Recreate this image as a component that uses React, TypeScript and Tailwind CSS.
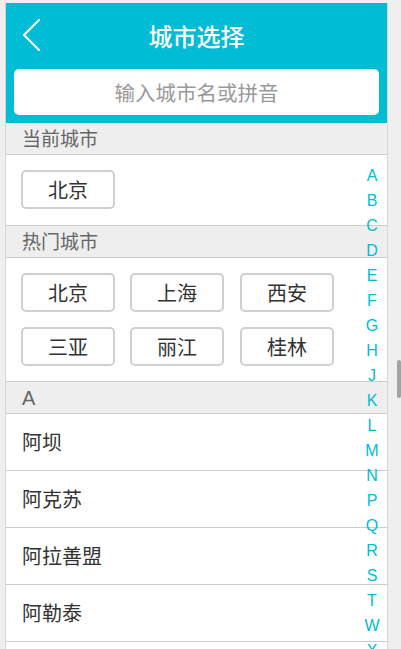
import React from "react";

const cjk = { fontFamily: '"Noto Sans CJK SC", "Liberation Sans", sans-serif' };
const latin = { fontFamily: '"Liberation Sans", Arial, sans-serif' };

const hot = ["北京", "上海", "西安", "三亚", "丽江", "桂林"];
const aList = ["阿坝", "阿克苏", "阿拉善盟", "阿勒泰", "阿里"];
const letters = ["A", "B", "C", "D", "E", "F", "G", "H", "J", "K", "L", "M", "N", "P", "Q", "R", "S", "T", "W", "X", "Y", "Z"];

function CityBtn({ name }: { name: string }) {
  return (
    <div className="h-[39px] w-[94px] rounded-[5px] border-2 border-[#cfcfcf] bg-white flex items-center justify-center text-[20px] text-[#333]">
      {name}
    </div>
  );
}

function SectionHead({ title }: { title: string }) {
  return (
    <div className="h-[32px] bg-[#eeeeee] border-b border-[#cccccc] pl-[16px] flex items-center text-[19px] text-[#666]">
      {title}
    </div>
  );
}

export default function App() {
  return (
    <div className="relative h-[649px] w-[401px] overflow-hidden bg-[#efefef]" style={cjk}>
      <div className="relative ml-[5px] mt-[3px] w-[383px] border-x border-[#d6d6d6] bg-white">
        {/* header */}
        <div className="bg-[#00bcd4] px-[8px] pb-[8px]">
          <div className="relative h-[66px] flex items-center justify-center">
            <svg className="absolute left-[8px] top-[16px]" width="20" height="32" viewBox="0 0 20 32" fill="none">
              <path d="M17 1 L2 16 L17 31" stroke="white" strokeWidth="2" strokeLinecap="round" strokeLinejoin="round" />
            </svg>
            <span className="text-white text-[24px] font-medium">城市选择</span>
          </div>
          <div className="h-[46px] rounded-[5px] bg-white flex items-center justify-center text-[20.5px] text-[#999]">
            输入城市名或拼音
          </div>
        </div>

        <SectionHead title="当前城市" />
        <div className="px-[15px] pt-[15px] pb-[16px] border-b border-[#cccccc]">
          <CityBtn name="北京" />
        </div>

        <SectionHead title="热门城市" />
        <div className="px-[15px] py-[15px] border-b border-[#cccccc] grid grid-cols-[94px_95px_94px] gap-x-[15px] gap-y-[15px]">
          {hot.map((c) => (
            <CityBtn key={c} name={c} />
          ))}
        </div>

        <div className="h-[32px] bg-[#eeeeee] border-b border-[#cccccc] pl-[16px] flex items-center text-[20px] text-[#666]" style={latin}>
          A
        </div>
        {aList.map((c) => (
          <div key={c} className="h-[57px] border-b border-[#cccccc] pl-[16px] flex items-center text-[20px] text-[#333]">
            {c}
          </div>
        ))}

        {/* index bar */}
        <div className="absolute left-[356px] top-[160px] w-[20px] flex flex-col items-center text-[#00bcd4] text-[16px] leading-[25px]" style={latin}>
          {letters.map((l) => (
            <span key={l}>{l}</span>
          ))}
        </div>
      </div>

      {/* scrollbar thumb */}
      <div className="absolute left-[397px] top-[360px] h-[38px] w-[4px] rounded-[2px] bg-[#a3a3a3]" />
    </div>
  );
}
